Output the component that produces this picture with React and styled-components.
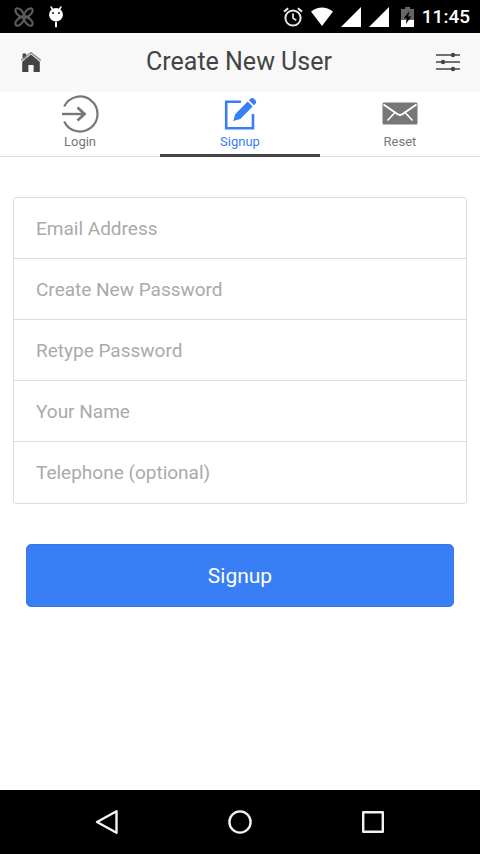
import React from "react";
import styled, { createGlobalStyle } from "styled-components";


const GlobalStyle = createGlobalStyle`
* {
    box-sizing: border-box;
}

body {
    margin: 0;
    background-color: white;
    font-family: Roboto, "Liberation Sans", sans-serif;
}

button, input {
    font-family: inherit;
}
`;

const fields = [
    { name: "email", type: "email", label: "Email Address" },
    { name: "password", type: "password", label: "Create New Password" },
    { name: "passwordCheck", type: "password", label: "Retype Password" },
    { name: "userName", type: "text", label: "Your Name" },
    { name: "telephone", type: "tel", label: "Telephone (optional)" },
];

const StatusBar = () => {
    return (
        <StStatusBar>
            <StStatusGroup $gap="14px">
                <svg width="20" height="20" viewBox="0 0 20 20" fill="none" stroke="#5c5c5c" strokeWidth="2.2">
                    <g transform="rotate(45 10 10)">
                        <ellipse cx="10" cy="3.6" rx="2.8" ry="5" />
                        <ellipse cx="10" cy="16.4" rx="2.8" ry="5" />
                        <ellipse cx="3.6" cy="10" rx="5" ry="2.8" />
                        <ellipse cx="16.4" cy="10" rx="5" ry="2.8" />
                    </g>
                </svg>
                <svg width="16" height="22" viewBox="0 0 16 22">
                    <path d="M3 1l2 3M13 1l-2 3" stroke="#fff" strokeWidth="1.5" strokeLinecap="round" />
                    <ellipse cx="8" cy="8.8" rx="7" ry="6.8" fill="#fff" />
                    <circle cx="5" cy="7" r="0.9" fill="#000" />
                    <circle cx="11" cy="7" r="0.9" fill="#000" />
                    <path d="M8 16.6v4" stroke="#fff" strokeWidth="2" strokeLinecap="round" />
                </svg>
            </StStatusGroup>

            <StStatusGroup $gap="8px">
                <svg width="20" height="20" viewBox="0 0 20 20" fill="none" stroke="#e8e8e8" strokeWidth="2">
                    <circle cx="10" cy="11" r="7.6" />
                    <path d="M10 6.5V11l3.3 2.4" strokeWidth="1.7" />
                    <path d="M1 4.6l4.2-3.4M19 4.6l-4.2-3.4" />
                </svg>
                <svg width="22" height="20" viewBox="0 0 22 20">
                    <path d="M0 4.4Q11-3.3 22 4.4L11 19z" fill="#fff" />
                </svg>
                <svg width="20" height="20" viewBox="0 0 20 20">
                    <path d="M20 0v20H0z" fill="#fff" />
                </svg>
                <svg width="20" height="20" viewBox="0 0 20 20">
                    <path d="M20 0v20H0z" fill="#fff" />
                </svg>
                <StBattery width="13" height="20" viewBox="0 0 13 20">
                    <path d="M4 0h5v2h4v11H0V2h4z" fill="#666" />
                    <path d="M0 13h13v7H0z" fill="#fff" />
                    <path d="M8.4 4L2.8 11.2h3L4.8 17l5.6-7.4H7.2z" fill="#000" />
                </StBattery>
                <StTime>11:45</StTime>
            </StStatusGroup>
        </StStatusBar>
    )
};

const LoginIcon = () => {
    return (
        <svg width="38" height="38" viewBox="0 0 38 38" fill="none" stroke="currentColor" strokeWidth="2.2">
            <path d="M3.2 11.5A17.5 17.5 0 1 1 3.2 26.5" />
            <path d="M1 19h22" strokeWidth="2.4" />
            <path d="M16.5 12.5L23.5 19l-7 6.5" strokeWidth="2.8" />
        </svg>
    )
};

const SignupIcon = () => {
    return (
        <svg width="34" height="38" viewBox="0 0 34 38">
            <path d="M18 6.8H3.2v26.4H30V19" fill="none" stroke="currentColor" strokeWidth="2.6" />
            <path d="M10.2 26l2.1-7.1L24.7 6.5l5 5L17.3 23.9z" fill="currentColor" />
            <path d="M25.9 5.3l1.5-1.5q1.8-1.6 3.6 0l1.4 1.4q1.6 1.8 0 3.6l-1.5 1.5z" fill="currentColor" />
        </svg>
    )
};

const ResetIcon = () => {
    return (
        <svg width="36" height="38" viewBox="0 0 36 38">
            <rect x="0.5" y="7.5" width="35" height="22" rx="1.5" fill="currentColor" />
            <path d="M1.5 9.5L15 18.8q3 2.2 6 0l13.5-9.3" fill="none" stroke="#fff" strokeWidth="2" />
            <path d="M5.5 25.5l7-7.5M30.5 25.5l-7-7.5" fill="none" stroke="#fff" strokeWidth="1.6" />
        </svg>
    )
};

const App = () => {
    return (
        <StPage>
            <GlobalStyle />
            <StatusBar />

            <StHeader>
                <StHeaderButton type="button" aria-label="Home">
                    <svg width="22" height="22" viewBox="0 0 22 22">
                        <path d="M2.6 2.5h3.6v5H2.6z" fill="#444" />
                        <path d="M11 3.5l8.8 7.2V21h-6.2v-7H8.4v7H2.2V10.7z" fill="#444" />
                        <path d="M1.2 9.4L11 1.6l9.8 7.8" fill="none" stroke="#8c8c8c" strokeWidth="1.4" />
                    </svg>
                </StHeaderButton>
                <StTitle>Create New User</StTitle>
                <StHeaderButton type="button" aria-label="Settings">
                    <svg width="24" height="22" viewBox="0 0 24 22" fill="#444">
                        <path d="M0 4h24M0 11h24M0 18h24" stroke="#444" strokeWidth="1.7" />
                        <circle cx="17" cy="4" r="2.2" />
                        <circle cx="7" cy="11" r="2.2" />
                        <circle cx="17" cy="18" r="2.2" />
                    </svg>
                </StHeaderButton>
            </StHeader>

            <StTabs>
                <StTab href="#login"><LoginIcon />Login</StTab>
                <StTab href="#signup" $active aria-current="page"><SignupIcon />Signup</StTab>
                <StTab href="#reset"><ResetIcon />Reset</StTab>
            </StTabs>

            <StForm>
                <StFieldGroup>
                    {fields.map((field) => (
                        <StField key={field.name}
                            type={field.type}
                            name={field.name}
                            aria-label={field.label}
                            placeholder={field.label} />
                    ))}
                </StFieldGroup>
                <StSubmitButton type="submit">Signup</StSubmitButton>
            </StForm>

            <StNavBar>
                <StNavButton type="button" aria-label="Back">
                    <svg width="26" height="26" viewBox="0 0 26 26">
                        <path d="M22.5 2.2v21.6L3 13z" />
                    </svg>
                </StNavButton>
                <StNavButton type="button" aria-label="Home screen">
                    <svg width="26" height="26" viewBox="0 0 26 26">
                        <circle cx="13" cy="13" r="10.6" />
                    </svg>
                </StNavButton>
                <StNavButton type="button" aria-label="Recent apps">
                    <svg width="26" height="26" viewBox="0 0 26 26">
                        <rect x="3.2" y="3.2" width="19.6" height="19.6" />
                    </svg>
                </StNavButton>
            </StNavBar>
        </StPage>
    )
};

export default App;

const StPage = styled.div`
min-height: 100vh;
display: flex;
flex-direction: column;
background-color: white;
`;

const StStatusBar = styled.div`
height: 33px;
padding: 0 10px 0 14px;
display: flex;
align-items: center;
justify-content: space-between;
background-color: black;
`;

const StStatusGroup = styled.div`
display: flex;
align-items: center;
gap: ${(props) => props.$gap};
`;

const StBattery = styled.svg`
margin-left: 4px;
`;

const StTime = styled.span`
font-size: 19px;
font-weight: 500;
line-height: 24px;
color: white;
`;

const StHeader = styled.header`
height: 59px;
padding: 0 20px 2px;
display: flex;
align-items: center;
justify-content: space-between;
background-color: #f8f8f8;
`;

const StHeaderButton = styled.button`
display: flex;
padding: 0;
border: none;
background: none;
cursor: pointer;
`;

const StTitle = styled.h1`
margin: 0;
font-size: 25px;
font-weight: 400;
line-height: 32px;
color: #444;
`;

const StTabs = styled.nav`
height: 65px;
display: grid;
grid-template-columns: repeat(3, 1fr);
box-shadow: inset 0 -1px #dcdcdc;
`;

const StTab = styled.a`
padding-top: 3px;
display: flex;
flex-direction: column;
align-items: center;
border-bottom: 3px solid ${(props) => (props.$active ? "#444" : "transparent")};
font-size: 13px;
line-height: 18px;
text-decoration: none;
color: ${(props) => (props.$active ? "#387ef5" : "#777")};
`;

const StForm = styled.form`
flex: 1;
padding: 40px 13px;
display: flex;
flex-direction: column;
`;

const StFieldGroup = styled.div`
display: flex;
flex-direction: column;
border: 1px solid #ddd;
border-radius: 3px;
`;

const StField = styled.input`
width: 100%;
height: 61px;
padding: 0 22px;
border: none;
border-bottom: 1px solid #ddd;
background: none;
font-size: 19px;
color: #444;
outline: none;

&:last-child {
    border-bottom: none;
}

&::placeholder {
    color: #aaa;
    opacity: 1;
}
`;

const StSubmitButton = styled.button`
height: 63px;
margin: 40px 13px 0;
border: 1px solid #3a76dc;
border-radius: 5px;
background-color: #387ef5;
font-size: 21px;
color: white;
cursor: pointer;
`;

const StNavBar = styled.nav`
height: 64px;
padding: 0 40px;
display: grid;
grid-template-columns: repeat(3, 1fr);
background-color: black;
`;

const StNavButton = styled.button`
display: flex;
align-items: center;
justify-content: center;
padding: 0;
border: none;
background: none;
cursor: pointer;

svg {
    fill: none;
    stroke: #f2f2f2;
    stroke-width: 2.4;
    stroke-linejoin: round;
}
`;
